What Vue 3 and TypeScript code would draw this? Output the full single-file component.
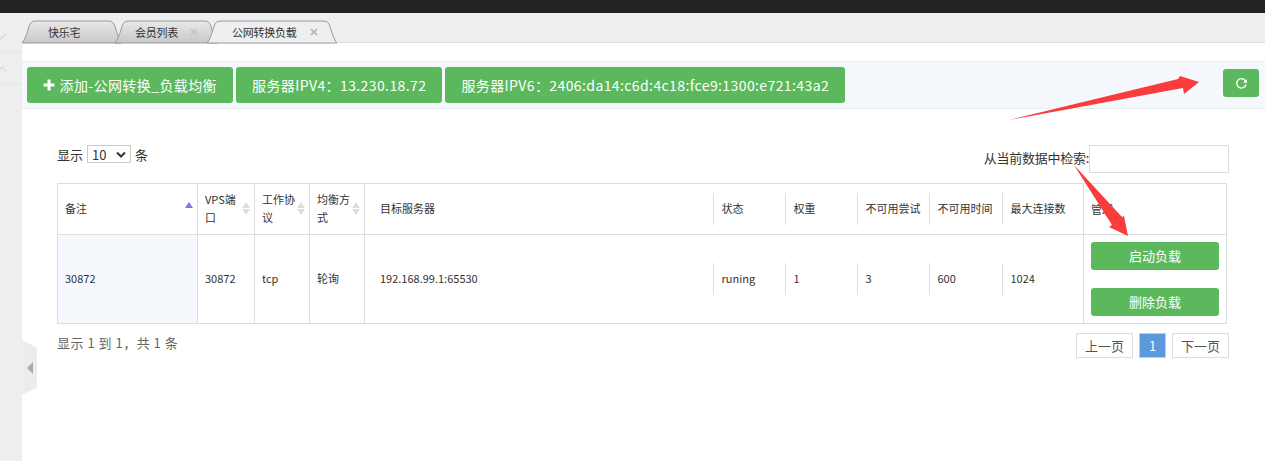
<script setup lang="ts">
</script>

<template>
  <div class="page">
    <div class="topbar"></div>
    <div class="main">
      <aside class="side">
        <div class="side-item tall"><svg width="10" height="8" viewBox="0 0 10 8"><path d="M1 3l3 3 5-5" fill="none" stroke="#ccc" /></svg></div>
        <div class="side-item"><svg width="10" height="8" viewBox="0 0 10 8"><path d="M1 6l4-4 4 4" fill="none" stroke="#ccc" /></svg></div>
      </aside>
      <div class="collapse"><span class="tri"></span></div>
      <div class="content">
        <div class="tabs">
          <div class="tab t1">
            <svg class="shape" width="100" height="23" viewBox="0 0 100 23"><defs><linearGradient id="g1" x1="0" y1="0" x2="0" y2="1"><stop offset="0" stop-color="#e9e9e9"/><stop offset="1" stop-color="#c8c8c8"/></linearGradient></defs><path d="M0 23C4 19 6 8 8 4Q9.500 1 13 1H87Q90.500 1 92 4C94 8 96 19 100 23Z" fill="url(#g1)" stroke="#999"/></svg>
            <span>快乐宅</span>
          </div>
          <div class="tab t2">
            <svg class="shape" width="103" height="23" viewBox="0 0 103 23"><path d="M0 23C4 19 6 8 8 4Q9.500 1 13 1H90Q93.500 1 95 4C97 8 99 19 103 23Z" fill="url(#g1)" stroke="#999"/></svg>
            <span>会员列表</span>
            <svg class="close" width="8" height="8" viewBox="0 0 8 8"><path d="M1 1l6 6M7 1l-6 6" stroke="#c4c4c4" stroke-width="1.700"/></svg>
          </div>
          <div class="tab t3">
            <svg class="shape" width="130" height="23" viewBox="0 0 130 23"><path d="M0 23C4 19 6 8 8 4Q9.500 1 13 1H117Q120.500 1 122 4C124 8 126 19 130 23Z" fill="#eeeff0" stroke="#999"/></svg>
            <span>公网转换负载</span>
            <svg class="close" width="8" height="8" viewBox="0 0 8 8"><path d="M1 1l6 6M7 1l-6 6" stroke="#b4b4b4" stroke-width="1.700"/></svg>
          </div>
        </div>
        <div class="toolbar">
          <div class="btn-group">
            <div class="gbtn"><svg class="plus" width="12" height="12" viewBox="0 0 12 12"><path d="M6 0.500v11M0.500 6h11" stroke="#fff" stroke-width="3"/></svg>添加-公网转换_负载均衡</div>
            <div class="gbtn">服务器IPV4：13.230.18.72</div>
            <div class="gbtn wide">服务器IPV6：2406:da14:c6d:4c18:fce9:1300:e721:43a2</div>
          </div>
          <div class="refresh">
            <svg width="13" height="13" viewBox="0 0 13 13"><path d="M10.600 4.200A4.700 4.700 0 1 0 11 7.500" fill="none" stroke="#fff" stroke-width="1.400"/><path d="M12 2v3.800H8.200z" fill="#fff"/></svg>
          </div>
        </div>
        <div class="panel">
          <div class="filters">
            <div class="length">显示 <span class="select">10<svg width="10" height="7" viewBox="0 0 10 7"><path d="M1 1.500l4 4 4-4" fill="none" stroke="#333" stroke-width="2"/></svg></span> 条</div>
            <div class="search"><span class="search-label">从当前数据中检索:</span><span class="input"></span></div>
          </div>
          <table class="grid">
            <colgroup>
              <col class="c1"/><col class="c2"/><col class="c3"/><col class="c3"/><col class="c5"/><col class="c6"/><col class="c6"/><col class="c6"/><col class="c9"/><col class="c10"/><col class="c11"/>
            </colgroup>
            <thead>
              <tr>
                <th class="sort active"><span class="txt">备注</span></th>
                <th class="sort"><span class="txt">VPS端口</span></th>
                <th class="sort"><span class="txt">工作协议</span></th>
                <th class="sort"><span class="txt">均衡方式</span></th>
                <th class="target"><span class="txt">目标服务器</span></th>
                <th class="inner"><span class="cell-in">状态</span></th>
                <th class="inner"><span class="cell-in">权重</span></th>
                <th class="inner"><span class="cell-in">不可用尝试</span></th>
                <th class="inner"><span class="cell-in">不可用时间</span></th>
                <th class="inner last"><span class="cell-in">最大连接数</span></th>
                <th class="manage">管理</th>
              </tr>
            </thead>
            <tbody>
              <tr>
                <td class="first">30872</td>
                <td>30872</td>
                <td>tcp</td>
                <td>轮询</td>
                <td class="target">192.168.99.1:65530</td>
                <td class="inner"><span class="cell-in">runing</span></td>
                <td class="inner"><span class="cell-in">1</span></td>
                <td class="inner"><span class="cell-in">3</span></td>
                <td class="inner"><span class="cell-in">600</span></td>
                <td class="inner last"><span class="cell-in">1024</span></td>
                <td class="manage"><div class="act">启动负载</div><div class="act">删除负载</div></td>
              </tr>
            </tbody>
          </table>
          <div class="footer">
            <div class="info">显示 1 到 1，共 1 条</div>
            <div class="pager"><span class="pg">上一页</span><span class="pg cur">1</span><span class="pg">下一页</span></div>
          </div>
        </div>
      </div>
    </div>
    <svg class="arrows" width="1265" height="461" viewBox="0 0 1265 461">
      <path d="M1009 120L1178 79L1180 76L1199 82L1184 94L1183 88Z" fill="#fb3c3c"/>
      <path d="M1074 165L1122 217L1124 216L1128 236L1109 227L1112 225Z" fill="#fb3c3c"/>
    </svg>
  </div>
</template>

<style>
html, body { margin: 0; background: #fff; overflow: hidden; }
</style>

<style scoped>
.page { position: relative; width: 1265px; height: 461px; overflow: hidden; font-family: "Noto Sans CJK SC", "Liberation Sans", sans-serif; color: #333; font-size: 11px; background: #fff; }
.topbar { height: 13px; background: #222; }
.main { display: flex; height: 448px; position: relative; }
.side { width: 22px; flex: none; background: #eee; }
.side-item { height: 32px; box-sizing: border-box; display: flex; align-items: center; border-bottom: 1px solid #e5e5e5; }
.side-item.tall { height: 40px; padding-top: 8px; }
.side-item svg { margin-left: -3px; }
.collapse { position: absolute; left: 22px; top: 327px; width: 15px; height: 55px; background: #ececec; clip-path: polygon(0 0, 100% 14%, 100% 86%, 0 100%); display: flex; align-items: center; justify-content: center; }
.tri { border: 6px solid transparent; border-right: 6px solid #aaa; border-left: 0; }
.content { flex: 1; min-width: 0; }
.tabs { height: 30px; background: #eeeff0; border-bottom: 1px solid #ddd; box-sizing: border-box; display: flex; align-items: flex-end; }
.tab { position: relative; height: 23px; margin-bottom: -1px; display: flex; align-items: center; font-size: 11px; letter-spacing: -0.25px; color: #333; flex: none; }
.tab span, .close { position: relative; }
.shape { position: absolute; left: 0; top: 0; overflow: visible; }
.t1 { width: 100px; }
.t1 span { margin-left: 26px; }
.t2 { width: 103px; margin-left: -7px; }
.t2 span { margin-left: 20px; }
.t2 .close { margin-left: 12px; }
.t3 { width: 130px; margin-left: -11px; }
.t3 span { margin-left: 25px; }
.t3 .close { margin-left: 13px; }
.toolbar { margin-top: 18px; height: 48px; box-sizing: border-box; background: #f5f9fd; border-top: 1px solid #e7ecf2; border-bottom: 1px solid #e7ecf2; display: flex; align-items: flex-start; justify-content: space-between; padding: 0 6px 0 5px; }
.btn-group { display: flex; gap: 3px; margin-top: 5px; }
.gbtn { height: 36px; display: flex; align-items: center; padding: 0 16px; background: #5cb85c; color: #fff; border-radius: 3px; font-size: 14px; letter-spacing: 0.4px; }
.wide { margin-left: 0; }
.plus { margin-right: 4.500px; }
.refresh { width: 36px; height: 28px; margin-top: 7px; background: #5cb85c; border-radius: 3px; display: flex; align-items: center; justify-content: center; }
.panel { padding: 0 36px 0 35px; }
.filters { display: flex; justify-content: space-between; height: 74px; padding-top: 36px; box-sizing: border-box; font-size: 13px; }
.length { display: flex; align-items: center; height: 20px; gap: 4px; margin-top: -1px; }
.select { width: 44px; height: 18px; box-sizing: border-box; border: 1px solid #ccc; display: flex; align-items: center; justify-content: space-between; padding: 0 4px; font-size: 13px; }
.search { display: flex; align-items: flex-start; line-height: 26px; }
.search-label { letter-spacing: -0.25px; }
.input { width: 140px; height: 28px; border: 1px solid #ddd; box-sizing: border-box; display: block; }
.grid { width: 1170px; table-layout: fixed; border-collapse: collapse; border: 1px solid #ddd; font-size: 11px; }
.c1 { width: 140px; }
.c2 { width: 57px; }
.c3 { width: 55px; }
.c5 { width: 349px; }
.c6 { width: 72px; }
.c9 { width: 73px; }
.c10 { width: 81px; }
.c11 { width: 143px; }
.grid th, .grid td { box-sizing: border-box; border: 1px solid #ddd; font-weight: 400; text-align: left; padding: 0 8px 2px 7px; line-height: 18px; position: relative; }
.grid th { height: 51px; }
.grid td { height: 89px; }
.grid .sort { padding-right: 11px; }
.sort::after { content: ""; position: absolute; right: 4px; top: 18px; border: 4px solid transparent; border-top: 0; border-bottom: 6px solid #ddd; }
.sort::before { content: ""; position: absolute; right: 4px; top: 25px; border: 4px solid transparent; border-bottom: 0; border-top: 6px solid #ddd; }
.active::before { display: none; }
.active::after { border-bottom-color: #7b7bd8; top: 18px; }
.first { background: #f5f9fd; }
.grid .target { padding-left: 15px; border-right: 0; }
.grid .inner { padding: 0; border-left: 0; border-right: 0; }
.cell-in { display: block; height: 32px; line-height: 30px; border-left: 1px solid #ddd; padding-left: 8px; white-space: nowrap; position: relative; left: -1px; }
.grid .manage { padding: 0 7px; }
.act { height: 28px; line-height: 28px; border-radius: 3px; background: #5cb85c; color: #fff; text-align: center; font-size: 13px; }
.act + .act { margin-top: 18px; }
.footer { display: flex; justify-content: space-between; margin-top: 9px; }
.info { font-size: 13px; color: #666; line-height: 20px; letter-spacing: 0.5px; }
.pager { display: flex; gap: 6px; font-size: 13px; }
.pg { height: 25px; line-height: 23px; box-sizing: border-box; border: 1px solid #ddd; padding: 0 8px; color: #555; }
.cur { background: #5b98dc; color: #fff; border-color: #ccc; width: 27px; text-align: center; padding: 0; }
.arrows { position: absolute; left: 0; top: 0; pointer-events: none; }
</style>
